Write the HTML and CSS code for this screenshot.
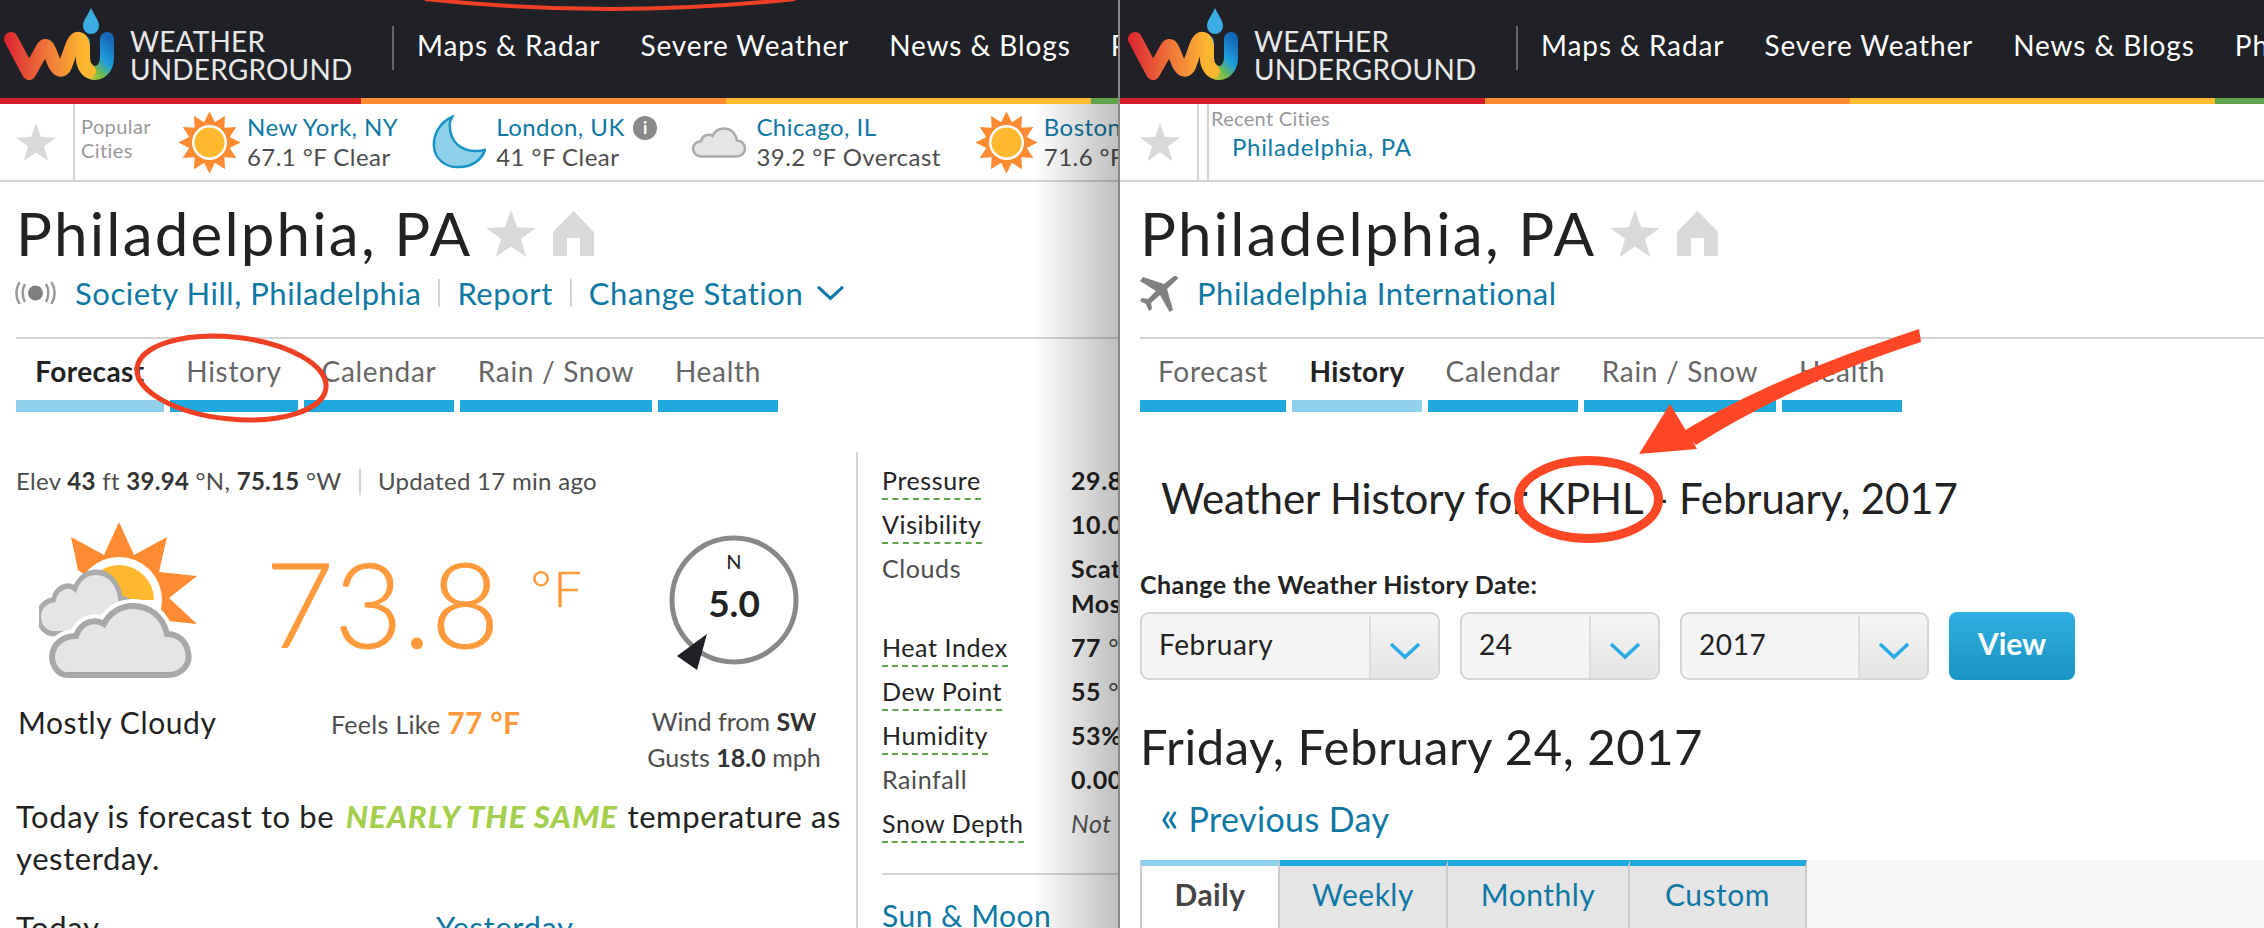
FILE: index.html
```html
<!DOCTYPE html>
<html lang="en">
<head>
  <meta charset="UTF-8">
  <title>Weather Underground - Philadelphia, PA</title>
  <link rel="stylesheet" href="styles.css">
</head>
<body>
  <!-- shared icons -->
  <svg class="icon-defs" width="0" height="0">
    <defs>
      <linearGradient id="wuWarm" gradientUnits="userSpaceOnUse" x1="5" y1="0" x2="85" y2="0">
        <stop offset="0" stop-color="#dc2430"/>
        <stop offset="0.55" stop-color="#f0783a"/>
        <stop offset="1" stop-color="#fdb72e"/>
      </linearGradient>
      <linearGradient id="wuCool" gradientUnits="userSpaceOnUse" x1="78" y1="74" x2="112" y2="40">
        <stop offset="0" stop-color="#f2c62c"/>
        <stop offset="0.35" stop-color="#6dbb4f"/>
        <stop offset="0.6" stop-color="#1f9fdc"/>
        <stop offset="1" stop-color="#1568b8"/>
      </linearGradient>
    </defs>
    <symbol id="wu-mark" viewBox="0 0 116 82">
      <path d="M92 8 C95 15 100 20 100 26 A8 8 0 0 1 84 26 C84 20 89 15 92 8Z" fill="#3bade3"/>
      <path d="M84 42 V58 C84 67 90 73 96 73 C103 73 108 66 108 58 V39" fill="none" stroke="url(#wuCool)" stroke-width="14" stroke-linecap="round"/>
      <path d="M12 39 L30 73 L44 48 C48 42 50 50 54 60 C57 68 62 74 66 66 L74 44 C78 36 83 38 84 46 V58 C84 64 87 69 90 71" fill="none" stroke="url(#wuWarm)" stroke-width="14" stroke-linecap="round" stroke-linejoin="round"/>
    </symbol>
    <symbol id="star" viewBox="0 0 40 38">
      <polygon points="20,0 25,14 40,14.5 28,23.5 32.5,38 20,29.5 7.5,38 12,23.5 0,14.5 15,14" fill="#d9d9d9"/>
    </symbol>
    <symbol id="house" viewBox="0 0 41 45">
      <path d="M20.5 0 L41 21 V45 H27 V27 H14 V45 H0 V21Z" fill="#d9d9d9"/>
    </symbol>
    <symbol id="sun" viewBox="-31.5 -31.5 63 63">
      <polygon points="0,-31 5.44,-20.28 15.5,-26.85 14.85,-14.85 26.85,-15.5 20.28,-5.44 31,0 20.28,5.44 26.85,15.5 14.85,14.85 15.5,26.85 5.44,20.28 0,31 -5.44,20.28 -15.5,26.85 -14.85,14.85 -26.85,15.5 -20.28,5.44 -31,0 -20.28,-5.44 -26.85,-15.5 -14.85,-14.85 -15.5,-26.85 -5.44,-20.28" fill="#ff8c33"/>
      <circle r="17.5" fill="#fff"/>
      <circle r="15" fill="#ffb92e"/>
    </symbol>
    <symbol id="cloud" viewBox="0 0 56 31">
      <path d="M10 29.5 H45 C50.5 29.5 54 26 54 21.5 C54 17 50.5 13.5 46 13.5 C45 6.5 40 1.5 33 1.5 C27.5 1.5 23.5 4.5 21.5 9 C19.5 7.5 17 7.5 14.5 8.5 C12 9.5 10.5 11.5 10 14 C5.5 14.5 2 17.5 2 21.5 C2 26 5.5 29.5 10 29.5Z" fill="#e5e5e5" stroke="#aaa" stroke-width="2.5"/>
    </symbol>
    <symbol id="chevron" viewBox="0 0 32 18">
      <path d="M2 2 L16 15 L30 2" fill="none" stroke="currentColor" stroke-width="3.5"/>
    </symbol>
  </svg>

  <div class="page">

    <!-- Forecast tab -->
    <section class="panel panel-left">
      <header class="site-header">
        <a class="logo">
          <svg class="logo-mark"><use href="#wu-mark"/></svg>
          <span class="logo-text">WEATHER<br>UNDERGROUND</span>
        </a>
        <nav class="site-nav">
          <a>Maps &amp; Radar</a>
          <a>Severe Weather</a>
          <a>News &amp; Blogs</a>
          <a>Photos</a>
        </nav>
      </header>
      <div class="stripe"><i class="s-red"></i><i class="s-orange"></i><i class="s-yellow"></i><i class="s-green"></i></div>

      <div class="city-strip">
        <div class="strip-star"><svg class="icon-star"><use href="#star"/></svg></div>
        <div class="strip-label">Popular<br>Cities</div>
        <div class="city first">
          <svg class="icon-sun"><use href="#sun"/></svg>
          <div class="city-text"><a>New York, NY</a><span>67.1 °F Clear</span></div>
        </div>
        <div class="city">
          <svg class="icon-moon" viewBox="0 0 54 54">
            <path d="M20 2 C6 8 1 22 2 32 C3 44 14 53 27 52 C39 52 49 46 53 35 C40 38 26 35 20 22 C17 14 17 7 20 2Z" fill="#8fd0ea" stroke="#1a94c4" stroke-width="2.5"/>
          </svg>
          <div class="city-text"><a>London, UK <b class="info">i</b></a><span>41 °F Clear</span></div>
        </div>
        <div class="city">
          <svg class="icon-cloud"><use href="#cloud"/></svg>
          <div class="city-text"><a>Chicago, IL</a><span>39.2 °F Overcast</span></div>
        </div>
        <div class="city">
          <svg class="icon-sun"><use href="#sun"/></svg>
          <div class="city-text"><a>Boston, MA</a><span>71.6 °F Clear</span></div>
        </div>
      </div>

      <div class="title-row">
        <h1>Philadelphia, PA</h1>
        <svg class="title-star"><use href="#star"/></svg>
        <svg class="title-house"><use href="#house"/></svg>
      </div>
      <div class="station-row">
        <svg class="icon-sensor" viewBox="0 0 41 26">
          <circle cx="20.5" cy="13" r="7.5" fill="#808080"/>
          <path d="M10 4 C7 9 7 17 10 22 M4.500 2 C0.500 9 0.500 17 4.500 24 M31 4 C34 9 34 17 31 22 M36.500 2 C40.500 9 40.500 17 36.500 24" fill="none" stroke="#999" stroke-width="2.5"/>
        </svg>
        <a>Society Hill, Philadelphia</a>
        <i class="sep"></i>
        <a>Report</a>
        <i class="sep"></i>
        <a>Change Station</a>
        <svg class="station-chevron"><use href="#chevron"/></svg>
      </div>

      <div class="tabs-wrap">
        <ul class="tabs">
          <li class="tab active w-148">Forecast</li>
          <li class="tab w-128">History</li>
          <li class="tab w-150">Calendar</li>
          <li class="tab w-192">Rain / Snow</li>
          <li class="tab w-120">Health</li>
        </ul>
      </div>

      <div class="forecast">
        <div class="conditions">
          <p class="meta">Elev <b>43</b> ft <b>39.94</b> °N, <b>75.15</b> °W <i class="sep"></i> Updated 17 min ago</p>

          <div class="now">
            <div class="now-icon">
              <svg class="icon-partly" viewBox="0 0 158 156">
                <polygon points="39,48 32,15 65,33 80,0 95,33 128,15 120,50 158,54 130,76 158,102 128,99 80,78" fill="#ff8c33"/>
                <circle cx="80" cy="78" r="43" fill="#fff"/>
                <path d="M45 78 A35 35 0 0 1 115 78Z" fill="#ffb92e"/>
                <svg x="-4" y="47" width="104" height="68" viewBox="0 0 56 31" preserveAspectRatio="none">
                  <use href="#cloud"/>
                </svg>
                <path d="M28 153 H128 C144 153 152 141 149 130 C147 118 138 112 128 112 C124 94 110 84 94 84 C80 84 70 92 65 102 C55 96 42 100 37 114 C24 114 14 122 13 134 C13 145 20 153 28 153Z" fill="#e5e5e5" stroke="#fff" stroke-width="14"/>
                <path d="M28 153 H128 C144 153 152 141 149 130 C147 118 138 112 128 112 C124 94 110 84 94 84 C80 84 70 92 65 102 C55 96 42 100 37 114 C24 114 14 122 13 134 C13 145 20 153 28 153Z" fill="#e5e5e5" stroke="#a8a8a8" stroke-width="6"/>
              </svg>
              <p>Mostly Cloudy</p>
            </div>
            <div class="now-temp">
              <div class="temp"><span class="temp-value">73.8</span><span class="temp-unit">°F</span></div>
              <p class="feels">Feels Like <b>77 °F</b></p>
            </div>
            <div class="now-wind">
              <div class="compass">
                <svg class="compass-ring" viewBox="0 0 130 135">
                  <circle cx="65" cy="65" r="62" fill="none" stroke="#888" stroke-width="5"/>
                  <polygon points="38,99 8,121 28,135" fill="#202126"/>
                </svg>
                <span class="compass-n">N</span>
                <span class="compass-speed">5.0</span>
              </div>
              <p>Wind from <b>SW</b></p>
              <p>Gusts <b>18.0</b> mph</p>
            </div>
          </div>

          <p class="outlook">Today is forecast to be <strong>NEARLY THE SAME</strong> temperature as yesterday.</p>
          <div class="compare"><span>Today</span><a>Yesterday</a></div>
        </div>

        <aside class="details">
          <dl>
            <dt><abbr>Pressure</abbr></dt><dd><b>29.85</b> in</dd>
            <dt><abbr>Visibility</abbr></dt><dd><b>10.0</b> miles</dd>
            <dt class="plain">Clouds</dt><dd><b>Scattered Clouds<br>Mostly Cloudy</b></dd>
            <dt><abbr>Heat Index</abbr></dt><dd><b>77</b> °F</dd>
            <dt><abbr>Dew Point</abbr></dt><dd><b>55</b> °F</dd>
            <dt><abbr>Humidity</abbr></dt><dd><b>53%</b></dd>
            <dt class="plain">Rainfall</dt><dd><b>0.00</b> in</dd>
            <dt><abbr>Snow Depth</abbr></dt><dd><em>Not available</em></dd>
          </dl>
          <h3 class="sun-moon">Sun &amp; Moon</h3>
        </aside>
      </div>
      <div class="edge-shadow"></div>
    </section>

    <!-- History tab -->
    <section class="panel panel-right">
      <header class="site-header">
        <a class="logo">
          <svg class="logo-mark"><use href="#wu-mark"/></svg>
          <span class="logo-text">WEATHER<br>UNDERGROUND</span>
        </a>
        <nav class="site-nav">
          <a>Maps &amp; Radar</a>
          <a>Severe Weather</a>
          <a>News &amp; Blogs</a>
          <a>Photos</a>
        </nav>
      </header>
      <div class="stripe"><i class="s-red"></i><i class="s-orange"></i><i class="s-yellow"></i><i class="s-green"></i></div>

      <div class="city-strip">
        <div class="strip-star"><svg class="icon-star"><use href="#star"/></svg></div>
        <div class="strip-recent">
          <div class="recent-label">Recent Cities</div>
          <a class="recent-city">Philadelphia, PA</a>
        </div>
      </div>

      <div class="title-row">
        <h1>Philadelphia, PA</h1>
        <svg class="title-star"><use href="#star"/></svg>
        <svg class="title-house"><use href="#house"/></svg>
      </div>
      <div class="station-row">
        <svg class="icon-plane" viewBox="0 0 40 37">
          <path d="M37 1 L39.500 3 L28 14 L34 35 L30.500 37 L21 20 L12 28 L13 34 L10 36 L7 29 L1 26 L3 23 L9 24 L17 16 L1 6 L4 2 L25 9 L35 1Z" fill="#808080"/>
        </svg>
        <a>Philadelphia International</a>
      </div>

      <div class="tabs-wrap">
        <ul class="tabs">
          <li class="tab w-146">Forecast</li>
          <li class="tab active w-130">History</li>
          <li class="tab w-150">Calendar</li>
          <li class="tab w-192">Rain / Snow</li>
          <li class="tab w-120">Health</li>
        </ul>
      </div>

      <div class="history">
        <h2>Weather History for KPHL - February, 2017</h2>
        <label class="date-label">Change the Weather History Date:</label>
        <div class="date-form">
          <div class="select w-month"><span>February</span><i><svg class="select-chevron"><use href="#chevron"/></svg></i></div>
          <div class="select w-day"><span>24</span><i><svg class="select-chevron"><use href="#chevron"/></svg></i></div>
          <div class="select w-year"><span>2017</span><i><svg class="select-chevron"><use href="#chevron"/></svg></i></div>
          <button class="view-btn">View</button>
        </div>
        <h2 class="history-date">Friday, February 24, 2017</h2>
        <a class="prev-day"><span class="prev-mark">«</span> Previous Day</a>
        <ul class="range-tabs">
          <li class="active w-daily">Daily</li>
          <li class="w-weekly">Weekly</li>
          <li class="w-monthly">Monthly</li>
          <li class="w-custom">Custom</li>
        </ul>
      </div>
    </section>
  </div>

  <!-- red pen marks drawn over the two screenshots -->
  <svg class="annotations" viewBox="0 0 2264 928">
    <path d="M425 -1 Q 610 19 795 -1" fill="none" stroke="#f04024" stroke-width="4"/>
    <ellipse cx="231.500" cy="378" rx="95" ry="41" transform="rotate(6 231.500 378)" fill="none" stroke="#f04024" stroke-width="5"/>
    <path d="M1919 329 C1835 358 1760 385 1682 432 L1696 445 C1770 398 1850 365 1921 342Z" fill="#ff4725"/>
    <polygon points="1639,454 1670,404 1697,449" fill="#ff4725"/>
    <ellipse cx="1588.500" cy="499.500" rx="70" ry="39" fill="none" stroke="#ff4725" stroke-width="9"/>
  </svg>
</body>
</html>
```

FILE: styles.css
```css
/* Base */
body {
  margin: 0;
  font-family: 'Lato', 'Open Sans', sans-serif;
  color: #222;
  background: #fff;
  overflow: hidden;
}
a { color: #0e78a5; text-decoration: none; }
p, h1, h2, h3, ul, dl, dd { margin: 0; padding: 0; }
ul { list-style: none; }
i { font-style: normal; }
.icon-defs { position: absolute; }

.page {
  display: flex;
  height: 928px;
  width: 2264px;
  overflow: hidden;
}
.panel {
  position: relative;
  height: 928px;
  overflow: hidden;
  flex: none;
  box-sizing: border-box;
}
.panel-left {
  width: 1124px;
  margin-left: -4px;
  border-right: 2px solid #888;
}
.panel-right { width: 1144px; }

/* Header */
.site-header {
  display: flex;
  height: 98px;
  width: 1300px;
  background: #202126;
  color: #fff;
}
.logo {
  display: flex;
  width: 398px;
  flex: none;
  box-sizing: border-box;
  position: relative;
  color: #e8e8e8;
}
.logo:after {
  content: "";
  position: absolute;
  right: 0;
  top: 26px;
  height: 44px;
  width: 2px;
  background: #666;
}
.logo-mark { width: 116px; height: 82px; margin-left: 3px; }
.logo-text {
  margin: 27px 0 0 15px;
  font-size: 28px;
  line-height: 28px;
  font-weight: 400;
  letter-spacing: 0.2px;
}
.site-nav {
  display: flex;
  gap: 40px;
  padding: 28px 0 0 23px;
  font-size: 28px;
  line-height: 34px;
  letter-spacing: 0.9px;
  white-space: nowrap;
}
.site-nav a { color: #fff; }

.stripe { display: flex; height: 6px; width: 1300px; }
.stripe i { width: 365px; flex: none; }
.s-red { background: #d71f2c; }
.s-orange { background: #ff8c33; }
.s-yellow { background: #ffb92e; }
.s-green { background: #5ea54a; }

/* City strip */
.city-strip {
  display: flex;
  height: 78px;
  box-sizing: border-box;
  border-bottom: 2px solid #d4d4d4;
  white-space: nowrap;
}
.strip-star {
  width: 75px;
  flex: none;
  border-right: 2px solid #d4d4d4;
  display: flex;
  align-items: center;
  justify-content: center;
  padding-left: 2px;
  box-sizing: content-box;
}
.icon-star { width: 40px; height: 38px; }
.strip-label {
  margin-left: 6px;
  padding-top: 10px;
  font-size: 20px;
  line-height: 24px;
  letter-spacing: 0.4px;
  color: #999;
  width: 73px;
  flex: none;
}
.city { display: flex; align-items: center; margin-left: 34px; flex: none; }
.city.first { margin-left: 24px; }
.city-text { margin-left: 6px; display: flex; flex-direction: column; letter-spacing: 0.45px; }
.city-text a { font-size: 24px; line-height: 30px; }
.city-text span { font-size: 24px; line-height: 30px; color: #4d4d4d; }
.icon-sun { width: 63px; height: 63px; }
.icon-moon { width: 54px; height: 54px; margin-right: 4px; }
.icon-cloud { width: 56px; height: 31px; margin-right: 3px; }
.info {
  display: inline-block;
  width: 24px;
  height: 24px;
  border-radius: 50%;
  background: #8a8a8a;
  color: #fff;
  font-size: 17px;
  line-height: 24px;
  text-align: center;
  vertical-align: 2px;
  margin-left: 2px;
}
.strip-recent {
  margin-left: 8px;
  border-left: 2px solid #d4d4d4;
  padding-left: 2px;
}
.recent-label { font-size: 20px; line-height: 24px; color: #999; padding-top: 2px; letter-spacing: 0.3px; }
.recent-city { display: block; font-size: 24px; line-height: 30px; margin: 2px 0 0 21px; letter-spacing: 0.7px; }

/* Title */
.title-row {
  display: flex;
  align-items: flex-start;
  padding: 20px 0 0 20px;
  height: 69px;
  box-sizing: content-box;
}
h1 { font-size: 60px; line-height: 62px; font-weight: 400; letter-spacing: 2.2px; white-space: nowrap; }
.title-star { width: 50px; height: 47px; margin: 8px 0 0 14px; }
.title-house { width: 41px; height: 45px; margin: 9px 0 0 17px; }

.station-row {
  display: flex;
  align-items: center;
  height: 44px;
  padding-left: 19px;
  font-size: 31px;
  letter-spacing: 0.55px;
  white-space: nowrap;
}
.station-row .sep {
  width: 2px;
  height: 28px;
  background: #d4d4d4;
  margin: 0 17px;
}
.icon-sensor { width: 41px; height: 26px; margin-right: 19px; }
.icon-plane { width: 40px; height: 37px; margin-right: 18px; }
.station-chevron { width: 29px; height: 16px; margin-left: 13px; color: #0e78a5; }

/* Tabs */
.tabs-wrap {
  margin: 22px 0 0 20px;
  border-top: 2px solid #d4d4d4;
  height: 73px;
}
.tabs { display: flex; gap: 6px; }
.tab {
  box-sizing: border-box;
  height: 73px;
  padding-top: 14px;
  border-bottom: 12px solid #1ea9de;
  font-size: 28px;
  line-height: 36px;
  letter-spacing: 0.7px;
  text-align: center;
  color: #666;
  white-space: nowrap;
}
.tab.active { border-bottom-color: #8fd0ea; color: #222; font-weight: 700; letter-spacing: 0.4px; }
.w-146 { width: 146px; }
.w-148 { width: 148px; }
.w-128 { width: 128px; }
.w-130 { width: 130px; }
.w-150 { width: 150px; }
.w-192 { width: 192px; }
.w-120 { width: 120px; }

/* Forecast body */
.forecast { display: flex; }
.conditions { width: 860px; flex: none; box-sizing: border-box; padding-left: 20px; padding-top: 55px; }
.meta { font-size: 24px; line-height: 28px; letter-spacing: 0.3px; color: #4d4d4d; white-space: nowrap; }
.meta b { color: #333; }
.meta .sep {
  display: inline-block;
  width: 2px;
  height: 26px;
  background: #d4d4d4;
  margin: 0 11px;
  vertical-align: -5px;
}
.now { display: flex; margin-top: 27px; height: 258px; }
.now-icon { width: 245px; flex: none; }
.icon-partly { display: block; width: 158px; height: 156px; margin-left: 23px; }
.now-icon p { font-size: 30px; line-height: 36px; letter-spacing: 0.6px; margin: 26px 0 0 2px; }
.now-temp { width: 383px; flex: none; position: relative; }
.temp { display: flex; align-items: flex-start; height: 182px; padding-left: 4px; color: #ff9a3c; }
.temp-value { font-size: 119px; line-height: 146px; font-weight: 300; margin-top: 7px; -webkit-text-stroke: 0.8px #ff9a3c; }
.temp-unit { font-size: 50px; line-height: 56px; letter-spacing: 2px; margin: 38px 0 0 31px; font-weight: 300; -webkit-text-stroke: 0.5px #ff9a3c; }
.feels { margin-left: 70px; font-size: 25px; line-height: 36px; letter-spacing: 0.3px; color: #4d4d4d; white-space: nowrap; }
.feels b { font-size: 30px; color: #ff9a3c; }
.now-wind { text-align: center; width: 180px; font-size: 25px; line-height: 36px; color: #4d4d4d; white-space: nowrap; }
.now-wind b { color: #333; }
.compass {
  position: relative;
  width: 130px;
  height: 135px;
  margin: 13px auto 33px;
  color: #222;
}
.compass-ring { display: block; width: 130px; height: 135px; }
.compass-n { position: absolute; left: 0; right: 0; top: 14px; font-size: 20px; line-height: 24px; }
.compass-speed { position: absolute; left: 0; right: 0; top: 44px; font-size: 37px; line-height: 48px; font-weight: 700; }
.outlook { font-size: 31px; line-height: 42px; letter-spacing: 0.6px; width: 840px; margin-top: 15px; }
.outlook strong { color: #a3cf4c; font-style: italic; font-weight: 900; letter-spacing: 1px; margin: 0 1px 0 3px; }
.compare { display: flex; margin-top: 30px; font-size: 31px; line-height: 36px; letter-spacing: 0.6px; }
.compare span { width: 420px; }

.details {
  flex: 1;
  margin-top: 40px;
  padding-top: 11px;
  border-left: 2px solid #d4d4d4;
  padding-left: 24px;
  min-height: 500px;
  white-space: nowrap;
}
.details dl {
  display: grid;
  grid-template-columns: 189px 400px;
  font-size: 25px;
  line-height: 35px;
  letter-spacing: 0.6px;
}
.details dt, .details dd { padding-bottom: 9px; }
.details dd { color: #4d4d4d; }
.details dd b { color: #222; }
.details dd em { color: #555; }
.details dt.plain { color: #4d4d4d; }
.details abbr {
  padding-bottom: 3px;
  border-bottom: 2px dashed #5ea54a;
}
.sun-moon {
  font-size: 30px;
  line-height: 38px;
  letter-spacing: 0.5px;
  font-weight: 400;
  color: #0e78a5;
  margin-top: 23px;
  padding-top: 21px;
  border-top: 2px solid #d4d4d4;
}
.edge-shadow {
  position: absolute;
  top: 104px;
  right: 0;
  bottom: 0;
  width: 84px;
  background: linear-gradient(to right, rgba(0,0,0,0), rgba(0,0,0,0.25));
}

/* History body */
.history { padding-left: 20px; }
.history h2 { font-size: 42px; line-height: 52px; font-weight: 400; letter-spacing: -0.1px; white-space: nowrap; }
.history > h2:first-child { padding: 60px 0 0 21px; }
.date-label { display: block; margin-top: 46px; font-size: 25px; line-height: 28px; letter-spacing: 0.45px; font-weight: 700; }
.date-form { display: flex; gap: 20px; margin-top: 14px; }
.select {
  display: flex;
  box-sizing: border-box;
  height: 68px;
  border: 2px solid #d5d5d5;
  border-radius: 9px;
  background: #f5f5f5;
}
.select span { flex: 1; padding-left: 17px; font-size: 28px; line-height: 60px; letter-spacing: 0.6px; }
.select i {
  display: flex;
  justify-content: center;
  align-items: center;
  width: 67px;
  margin-top: 2px;
  border-left: 2px solid #ddd;
  border-radius: 0 8px 8px 0;
  background: linear-gradient(#f5f5f5, #e4e4e4);
}
.select-chevron { width: 32px; height: 18px; color: #29abe2; margin-top: 7px; }
.w-month { width: 300px; }
.w-day { width: 200px; }
.w-year { width: 249px; }
.view-btn {
  width: 126px;
  height: 68px;
  padding: 0 0 6px;
  border: 0;
  border-radius: 8px;
  background: linear-gradient(#2fb0e0, #1a94c4);
  color: #fff;
  font-family: inherit;
  font-size: 30px;
  font-weight: 700;
}
.history .history-date { margin-top: 36px; font-size: 49px; line-height: 60px; letter-spacing: 0.5px; }
.prev-day { display: block; height: 40px; margin: 23px 0 0 20px; font-size: 34px; line-height: 40px; letter-spacing: 0.4px; }
.prev-mark { font-size: 44px; line-height: 30px; }
.range-tabs {
  display: flex;
  margin-top: 21px;
  height: 80px;
  background: #f6f6f6;
  font-size: 30px;
  letter-spacing: 0.5px;
  text-align: center;
}
.range-tabs li {
  box-sizing: border-box;
  height: 80px;
  padding-top: 6px;
  line-height: 44px;
  border-top: 6px solid #1ea9de;
  border-right: 2px solid #ccc;
  background: #e5e5e5;
  color: #0e78a5;
}
.range-tabs li.active {
  background: #fff;
  border-top-color: #8fd0ea;
  border-left: 2px solid #ccc;
  color: #444;
  font-weight: 700;
}
.w-daily { width: 140px; }
.w-weekly { width: 168px; }
.w-monthly { width: 182px; }
.w-custom { width: 177px; }

.annotations {
  position: absolute;
  left: 0;
  top: 0;
  width: 2264px;
  height: 928px;
  pointer-events: none;
}
```
